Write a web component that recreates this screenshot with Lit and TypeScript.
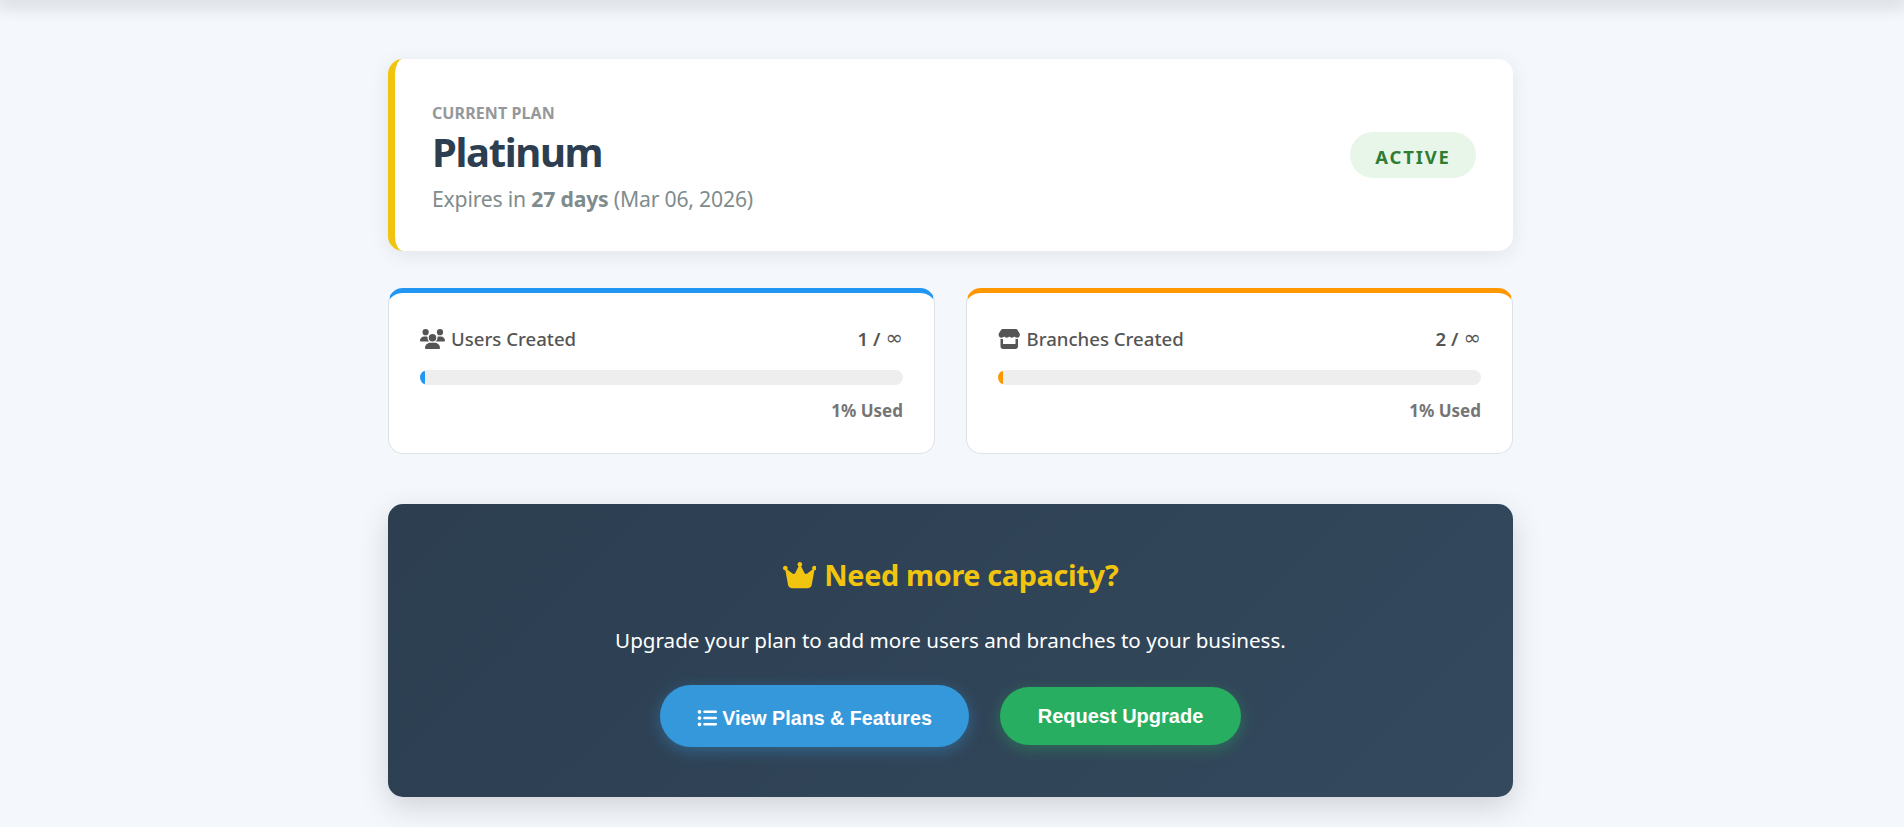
import { LitElement, html, css, svg } from "lit";
import { customElement } from "lit/decorators.js";

const USERS = svg`<path d="M144 0a80 80 0 1 1 0 160A80 80 0 1 1 144 0zM512 0a80 80 0 1 1 0 160A80 80 0 1 1 512 0zM0 298.700C0 239.800 47.800 192 106.700 192h42.700c15.900 0 31 3.500 44.600 9.700c-1.300 7.200-1.900 14.700-1.900 22.300c0 38.200 16.800 72.500 43.300 96c-.2 0-.4 0-.7 0H21.300C9.600 320 0 310.400 0 298.700zM405.300 320c-.2 0-.4 0-.7 0c26.600-23.500 43.300-57.800 43.300-96c0-7.600-.7-15-1.900-22.300c13.600-6.300 28.700-9.700 44.600-9.700h42.700C592.200 192 640 239.800 640 298.700c0 11.800-9.600 21.300-21.300 21.300H405.300zM224 224a96 96 0 1 1 192 0 96 96 0 1 1 -192 0zM128 485.300C128 411.700 187.700 352 261.300 352H378.700C452.300 352 512 411.700 512 485.300c0 14.700-11.900 26.700-26.700 26.700H154.700c-14.700 0-26.700-11.900-26.700-26.700z"/>`;
const STORE = svg`<path d="M547.600 103.800L490.300 13.100C485.200 5 476.100 0 466.400 0H109.600C99.900 0 90.800 5 85.700 13.100L28.300 103.800c-29.600 46.800-3.400 111.900 51.900 119.400c4 .5 8.100 .8 12.100 .8c26.100 0 49.300-11.400 65.200-29c15.900 17.600 39.100 29 65.200 29c26.100 0 49.300-11.400 65.200-29c15.900 17.600 39.100 29 65.200 29c26.200 0 49.300-11.400 65.200-29c16 17.600 39.100 29 65.200 29c4.100 0 8.100-.3 12.100-.8c55.500-7.400 81.800-72.500 52.100-119.400zM499.700 254.900l-.1 0c-5.300 .7-10.700 1.100-16.200 1.100c-12.400 0-24.300-1.900-35.400-5.300V384H128V250.600c-11.200 3.500-23.200 5.400-35.600 5.400c-5.500 0-11-.4-16.300-1.100l-.1 0c-4.100-.6-8.100-1.300-12-2.300V384v64c0 35.300 28.700 64 64 64H448c35.300 0 64-28.700 64-64V384 252.600c-4 1-8 1.800-12.300 2.300z"/>`;
const CROWN = svg`<path d="M309 106c11.400-7 19-19.700 19-34c0-22.100-17.900-40-40-40s-40 17.900-40 40c0 14.400 7.600 27 19 34L209.700 220.600c-9.100 18.200-32.700 23.400-48.600 10.700L72 160c5-6.700 8-15 8-24c0-22.100-17.900-40-40-40S0 113.900 0 136s17.900 40 40 40c.2 0 .5 0 .7 0L86.400 427.400c5.500 30.400 32 52.600 63 52.600H426.600c30.900 0 57.400-22.100 63-52.600L535.300 176c.2 0 .5 0 .7 0c22.100 0 40-17.900 40-40s-17.900-40-40-40s-40 17.900-40 40c0 9 3 17.300 8 24l-89.700 71.300c-15.900 12.700-39.500 7.500-48.600-10.700L309 106z"/>`;
const LIST = svg`<path d="M64 144a48 48 0 1 0 0-96 48 48 0 1 0 0 96zM192 64c-17.700 0-32 14.300-32 32s14.300 32 32 32H480c17.700 0 32-14.300 32-32s-14.300-32-32-32H192zm0 160c-17.700 0-32 14.300-32 32s14.300 32 32 32H480c17.700 0 32-14.300 32-32s-14.300-32-32-32H192zm0 160c-17.700 0-32 14.300-32 32s14.300 32 32 32H480c17.700 0 32-14.300 32-32s-14.300-32-32-32H192zM64 464a48 48 0 1 0 0-96 48 48 0 1 0 0 96zm48-208a48 48 0 1 0 -96 0 48 48 0 1 0 96 0z"/>`;

@customElement("app-root")
export class AppRoot extends LitElement {
  static styles = css`
    :host { display: block; min-height: 827px; background: #f4f7fc; font-family: "Noto Sans", "Open Sans", sans-serif; overflow: hidden; }
    .topbar { height: 0; box-shadow: 0 0 18px 4px rgba(0,0,0,.22); }
    .page { width: 1125px; margin-left: 388px; padding-top: 59px; display: flex; flex-direction: column; }
    .plan { height: 192px; box-sizing: border-box; background: #fff; border-left: 7px solid #f1c40f; border-radius: 15px; box-shadow: 0 4px 20px rgba(0,0,0,.08); padding: 0 37px 0 37px; display: flex; align-items: center; justify-content: space-between; }
    .info { padding-top: 5px; }
    .eyebrow { font-size: 16px; font-weight: 700; color: #95989a; line-height: 20px; letter-spacing: .1px; }
    h1 { margin: 3px 0 0; font-size: 40px; font-weight: 700; color: #2c3e50; line-height: 52px; letter-spacing: -1.35px; }
    .exp { margin-top: 7px; font-size: 21.2px; color: #7f8c8d; line-height: 28px; letter-spacing: -.2px; }
    .exp b { font-weight: 700; }
    .badge { width: 126px; height: 46px; padding-top: 2px; box-sizing: border-box; border-radius: 23px; background: #e8f5e9; color: #2e7d32; font-weight: 700; font-size: 18.4px; letter-spacing: 1.9px; display: flex; align-items: center; justify-content: center; }
    .stats { display: grid; grid-template-columns: 1fr 1fr; gap: 31px; margin-top: 37px; }
    .stat { height: 166px; box-sizing: border-box; background: #fff; border: 1px solid #dfe1e4; border-top: 5px solid var(--c); border-radius: 15px; padding: 33px 31px 0; }
    .row { display: flex; justify-content: space-between; align-items: center; font-size: 18.6px; font-weight: 500; color: #555; line-height: 25px; }
    .lab { display: flex; align-items: center; gap: 6px; }
    .num { font-weight: 600; display: flex; align-items: center; gap: 5px; }
    .inf { font-family: "DejaVu Sans", sans-serif; font-weight: 400; font-size: 21px; }
    .row svg { fill: #555; height: 20px; display: block; }
    .track { height: 15px; border-radius: 8px; background: #eee; overflow: hidden; margin-top: 19px; }
    .fill { height: 100%; background: var(--c); border-radius: 8px; }
    .used { text-align: right; font-size: 17px; font-weight: 700; color: #757575; margin-top: 15px; line-height: 22px; }
    .cta { height: 293px; box-sizing: border-box; margin-top: 50px; border-radius: 15px; background: linear-gradient(135deg, #2c3e50, #34495e); box-shadow: 0 10px 30px rgba(0,0,0,.15); display: flex; flex-direction: column; align-items: center; padding-top: 52px; color: #fff; }
    h2 { margin: 0; font-size: 28.8px; font-weight: 700; color: #f1c40f; line-height: 38px; display: flex; align-items: center; gap: 8px; letter-spacing: -.35px; }
    h2 svg { height: 30px; fill: #f1c40f; }
    .cta p { margin: 33px 0 0; font-size: 20.6px; line-height: 27px; }
    .btns { display: flex; align-items: center; gap: 31px; margin-top: 31px; font-family: "Liberation Sans", Arial, sans-serif; }
    .btn { border-radius: 31px; color: #fff; font-weight: 700; display: flex; align-items: center; justify-content: center; box-sizing: border-box; }
    .blue { width: 309px; height: 62px; font-size: 19.7px; background: #3498db; box-shadow: 0 4px 15px rgba(52,152,219,.4); gap: 5px; padding-top: 4px; }
    .blue svg { height: 20px; fill: #fff; }
    .green { width: 241px; height: 58px; font-size: 20px; background: #27ae60; box-shadow: 0 4px 15px rgba(39,174,96,.4); }
  `;
  private stat(icon: unknown, box: string, label: string, n: string, color: string) {
    return html`<div class="stat" style="--c:${color}">
      <div class="row"><span class="lab"><svg viewBox="${box}">${icon}</svg>${label}</span><span class="num">${n} / <span class="inf">∞</span></span></div>
      <div class="track"><div class="fill" style="width:1%"></div></div>
      <div class="used">1% Used</div>
    </div>`;
  }
  render() {
    return html`<div class="topbar"></div>
    <div class="page">
      <section class="plan">
        <div class="info">
          <div class="eyebrow">CURRENT PLAN</div>
          <h1>Platinum</h1>
          <div class="exp">Expires in <b>27 days</b> (Mar 06, 2026)</div>
        </div>
        <div class="badge">ACTIVE</div>
      </section>
      <div class="stats">
        ${this.stat(USERS, "0 0 640 512", "Users Created", "1", "#2196f3")}
        ${this.stat(STORE, "0 0 576 512", "Branches Created", "2", "#ff9800")}
      </div>
      <section class="cta">
        <h2><svg viewBox="0 0 576 512">${CROWN}</svg>Need more capacity?</h2>
        <p>Upgrade your plan to add more users and branches to your business.</p>
        <div class="btns">
          <div class="btn blue"><svg viewBox="0 0 512 512">${LIST}</svg>View Plans &amp; Features</div>
          <div class="btn green">Request Upgrade</div>
        </div>
      </section>
    </div>`;
  }
}
